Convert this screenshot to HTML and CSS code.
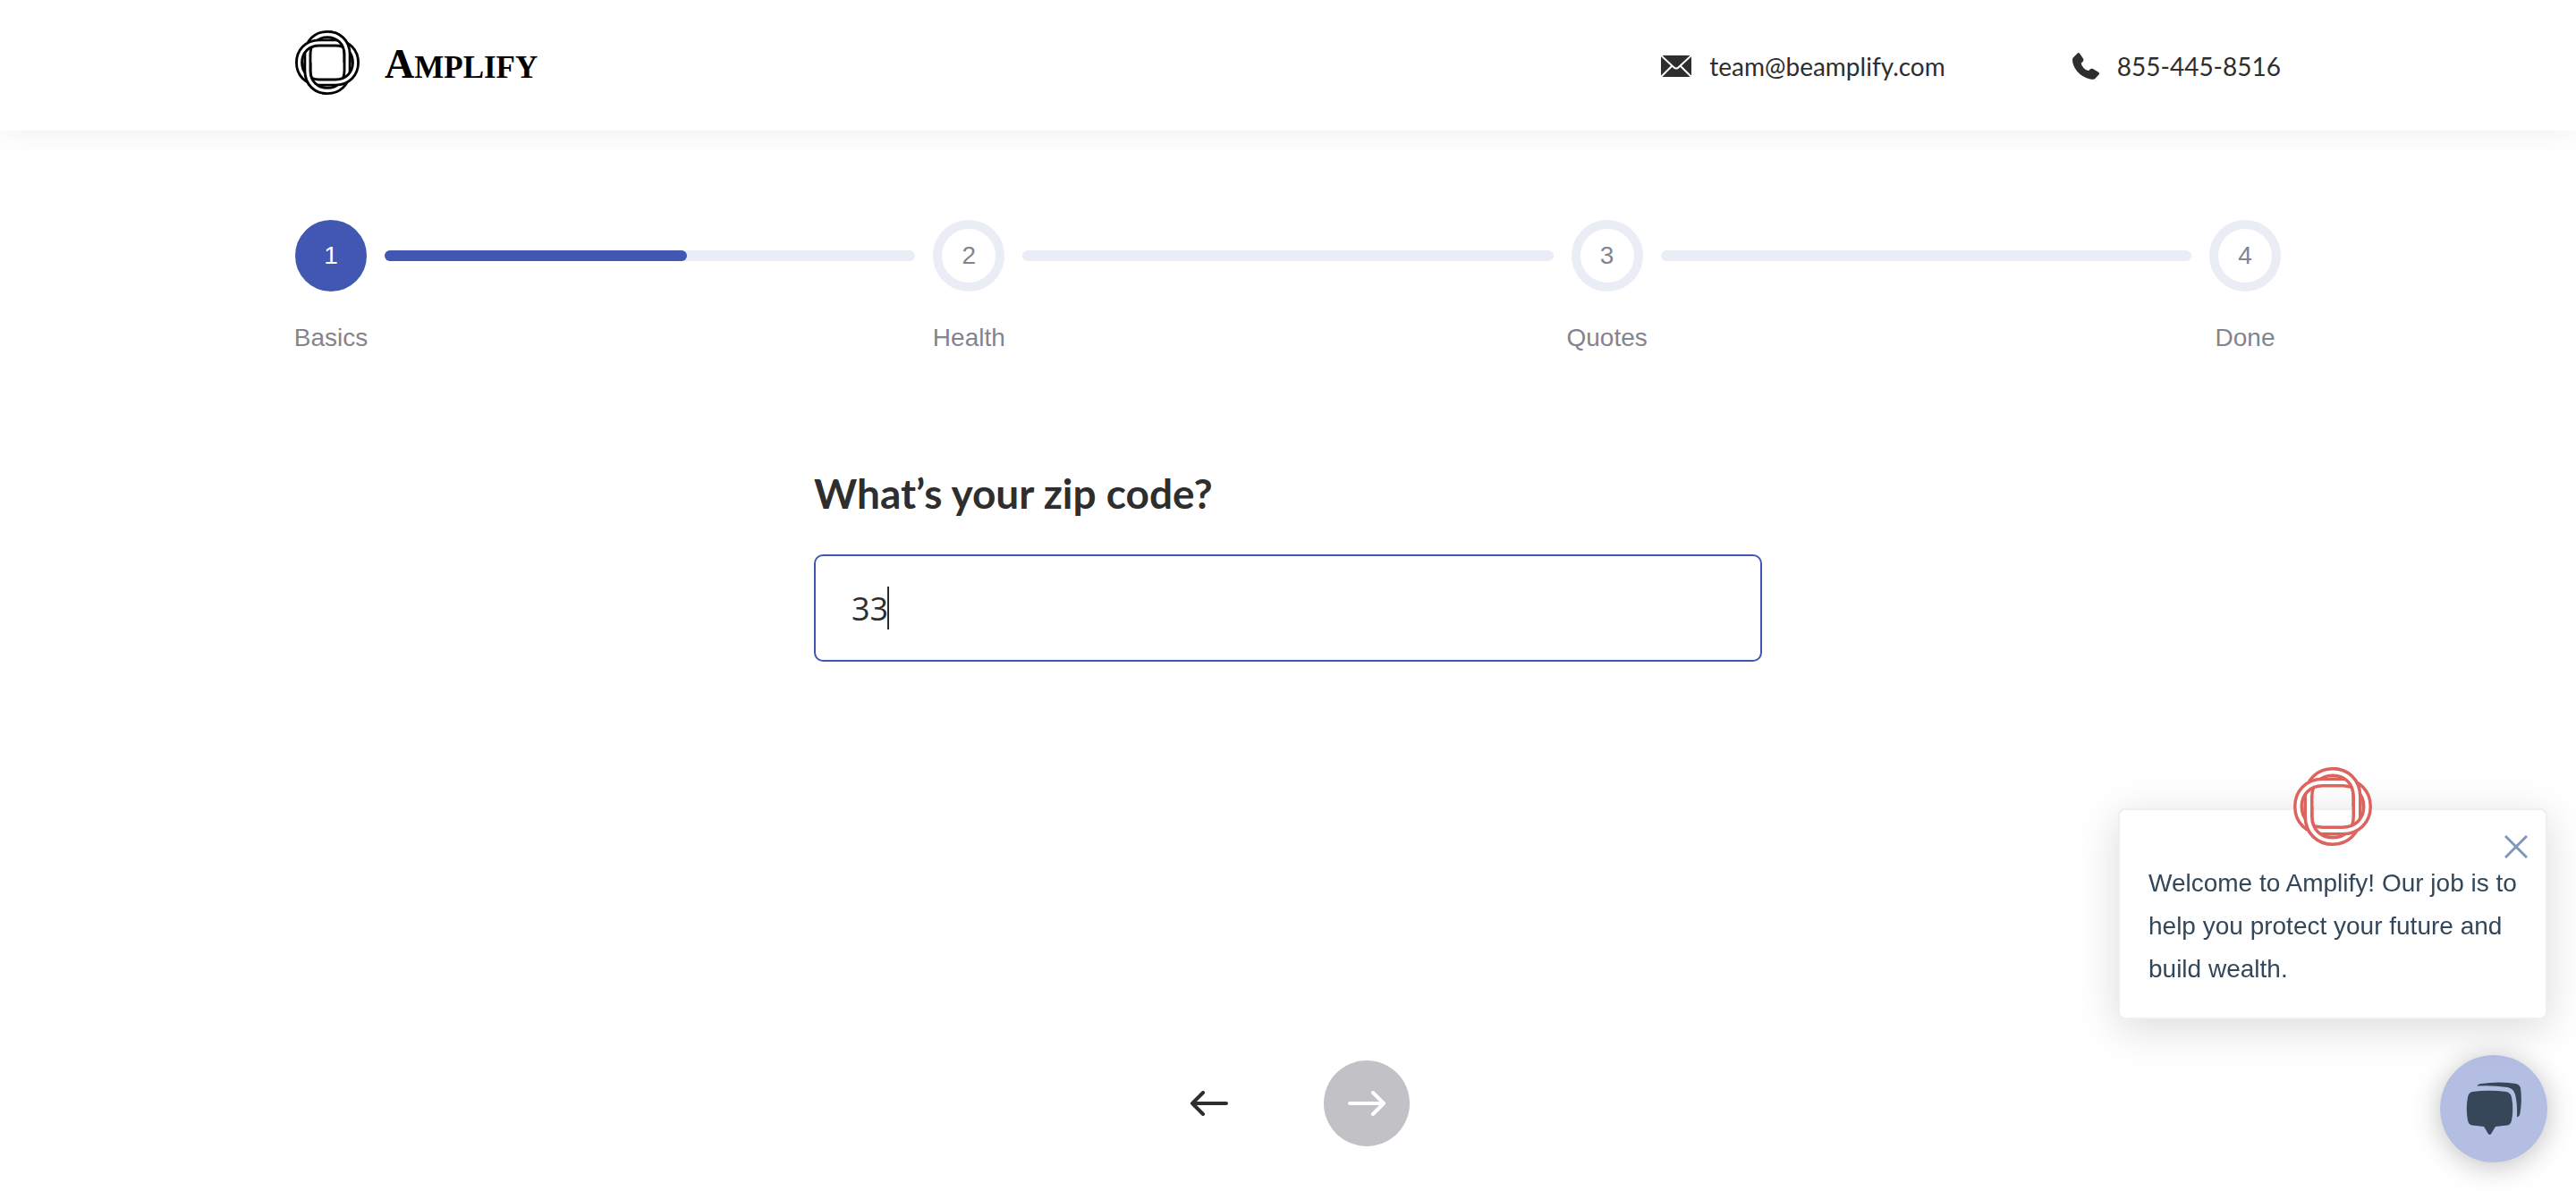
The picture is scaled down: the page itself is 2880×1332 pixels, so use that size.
FILE: index.html
```html
<!DOCTYPE html>
<html lang="en">
<head>
<meta charset="utf-8">
<meta name="viewport" content="width=device-width, initial-scale=1">
<title>Amplify</title>
<link rel="stylesheet" href="styles.css">
</head>
<body class="page">
<svg class="defs" aria-hidden="true">
  <defs>
    <clipPath id="corners"><path d="M0-46H46V0H0ZM-46 0H0V46H-46Z"/></clipPath>
    <path id="tall" d="M-27-11V11C-27 28-15 38.500 0 38.500S27 28 27 11V-11C27-28 15-38.500 0-38.500S-27-28-27-11Z"/>
    <path id="wide" d="M-11-27H11C28-27 38.500-15 38.500 0S28 27 11 27H-11C-28 27-38.500 15-38.500 0S-28-27-11-27Z"/>
    <symbol id="knot" viewBox="-44 -44 88 88">
      <use href="#tall" class="knot-edge"/><use href="#tall" class="knot-core"/>
      <use href="#wide" class="knot-edge"/><use href="#wide" class="knot-core"/>
      <g clip-path="url(#corners)"><use href="#tall" class="knot-edge"/><use href="#tall" class="knot-core"/></g>
    </symbol>
  </defs>
</svg>

<header class="header">
  <div class="container header-row">
    <a class="brand" href="#" aria-label="Amplify">
      <svg class="brand-mark"><use href="#knot"/></svg>
      <span class="brand-name"><span class="brand-initial">A</span>MPLIFY</span>
    </a>
    <nav class="contacts">
      <a class="contact" href="mailto:team@beamplify.com">
        <svg class="icon-mail" viewBox="0 0 34 24"><path d="M0 0H34V24H0Z" fill="#2e2e2e"/><path d="M0 0L14 13Q17 16 20 13L34 0M0 24L12 12M34 24L22 12" fill="none" stroke="#fff" stroke-width="2"/></svg>
        team@beamplify.com
      </a>
      <a class="contact" href="tel:8554458516">
        <svg class="icon-phone" viewBox="0 0 30 30"><path d="M6 0.300Q7-.3 8 .7L12 6.500Q12.800 8 12 9.500L9.700 11.700Q10 14 12.500 17Q15.500 20.200 18.200 20L20.300 18Q21.700 17.300 23 18L29.500 22Q30.400 23 29.700 24.200L25 29.200Q23 30.300 20 29.600Q11 27.600 5 20.500Q0 14 0 7.500Q0 6.500 .8 5.500Z" fill="#2e2e2e"/></svg>
        855-445-8516
      </a>
    </nav>
  </div>
</header>

<main class="container main">
  <ol class="steps">
    <li class="step step-active"><span class="step-dot">1</span><span class="step-label">Basics</span></li>
    <li class="bar" aria-hidden="true"><div class="bar-fill" style="width: 57%"></div></li>
    <li class="step"><span class="step-dot">2</span><span class="step-label">Health</span></li>
    <li class="bar" aria-hidden="true"></li>
    <li class="step"><span class="step-dot">3</span><span class="step-label">Quotes</span></li>
    <li class="bar" aria-hidden="true"></li>
    <li class="step"><span class="step-dot">4</span><span class="step-label">Done</span></li>
  </ol>

  <form class="question">
    <label class="question-title" for="zip">What’s your zip code?</label>
    <div class="field">
      <input class="field-input" id="zip" type="text" inputmode="numeric" value="33">
      <span class="caret"></span>
    </div>
    <div class="actions">
      <button class="round" type="button" aria-label="Back">
        <svg class="arrow" viewBox="0 0 42 28"><path d="M40 14H2M14 2L2 14L14 26"/></svg>
      </button>
      <button class="round round-next" type="submit" aria-label="Next">
        <svg class="arrow" viewBox="0 0 42 28"><path d="M2 14H40M28 2L40 14L28 26"/></svg>
      </button>
    </div>
  </form>
</main>

<aside class="chat">
  <div class="bubble">
    <svg class="bubble-mark"><use href="#knot"/></svg>
    <button class="bubble-close" type="button" aria-label="Close"><svg class="close-icon" viewBox="0 0 26 26"><path d="M1 1L25 25M25 1L1 25"/></svg></button>
    <p class="bubble-text">Welcome to Amplify! Our job is to help you protect your future and build wealth.</p>
  </div>
  <button class="chat-button" type="button" aria-label="Open chat">
    <svg class="chat-icon" viewBox="0 0 62 60"><path d="M7 11Q26 8.500 45 11Q50 12 51 17Q53.500 30 51 43Q50 48 46 48.500L33 50Q31 53 28.500 57.500Q26.500 60.500 24.500 57.500Q22 53 20 50L7 48.500Q3 48 2 43Q-.5 30 2 17Q3 12 7 11Z"/><path d="M12.500 4.500Q13 2.500 17 2Q37-1 56 2Q60 3 61 7Q63 21 60.500 35Q60 38.500 57 39.500Q57.500 24 55 14Q53 7 46 6Q30 3.500 12.500 4.500Z"/></svg>
  </button>
</aside>
</body>
</html>
```
FILE: styles.css
```css
* { box-sizing: border-box; }

.page {
  display: flex;
  flex-direction: column;
  min-height: 100vh;
  margin: 0;
  background: #fff;
  color: #2e2e2e;
  font-family: Lato, "Liberation Sans", sans-serif;
}

.defs { position: absolute; width: 0; height: 0; }

.knot-edge,
.knot-core { fill: none; }
.knot-edge { stroke: currentColor; stroke-width: 11; }
.knot-core { stroke: #fff; stroke-width: 4; }

.container {
  width: 100%;
  max-width: 2300px;
  margin: 0 auto;
  padding: 0 40px;
}

.header { box-shadow: 0 4px 32px rgba(0, 0, 0, 0.06); }

.header-row {
  display: flex;
  align-items: center;
  justify-content: space-between;
  padding-top: 34px;
  padding-bottom: 40px;
}

.brand {
  display: flex;
  align-items: center;
  gap: 28px;
  color: #000;
  text-decoration: none;
}
.brand-mark { width: 72px; height: 72px; }
.brand-name {
  padding-top: 8px;
  font: bold 35px/48px "Liberation Serif", serif;
}
.brand-initial { font-size: 46px; }

.contacts {
  display: flex;
  gap: 142px;
  padding-top: 8px;
}
.contact {
  display: flex;
  align-items: center;
  gap: 20px;
  color: #2e2e2e;
  font-size: 28px;
  line-height: 40px;
  text-decoration: none;
}
.icon-mail { width: 34px; height: 24px; }
.icon-phone { width: 30px; height: 30px; }

.main {
  display: flex;
  flex: 1;
  flex-direction: column;
  padding-top: 100px;
  padding-bottom: 50px;
}

.steps {
  display: flex;
  gap: 20px;
  margin: 0;
  padding: 0;
  list-style: none;
  color: #84848f;
  font: 28px/32px "Liberation Sans", sans-serif;
}
.step {
  display: flex;
  flex-direction: column;
  align-items: center;
  gap: 36px;
  width: 80px;
}
.step-dot {
  display: flex;
  align-items: center;
  justify-content: center;
  width: 80px;
  height: 80px;
  border: 10px solid #eaecf6;
  border-radius: 50%;
}
.step-active .step-dot {
  border-color: #4257b2;
  background: #4257b2;
  color: #fff;
}
.step-label { white-space: nowrap; }
.bar {
  flex: 1;
  height: 12px;
  margin-top: 34px;
  border-radius: 6px;
  background: #eaecf6;
}
.bar-fill {
  height: 12px;
  border-radius: 6px;
  background: #4257b2;
}

.question {
  display: flex;
  flex: 1;
  flex-direction: column;
  width: 100%;
  max-width: 1060px;
  margin: 128px auto 0;
}
.question-title {
  margin-bottom: 38px;
  font-size: 46px;
  font-weight: bold;
  line-height: 60px;
}
.field { position: relative; }
.field-input {
  width: 100%;
  height: 120px;
  padding: 0 40px;
  border: 2px solid #4257b2;
  border-radius: 10px;
  background: #fff;
  color: #2e2e2e;
  font: 36px/48px "Open Sans", sans-serif;
  outline: none;
}
.caret {
  position: absolute;
  top: 36px;
  left: 82px;
  width: 2px;
  height: 48px;
  background: #2e2e2e;
}

.actions {
  display: flex;
  justify-content: center;
  gap: 80px;
  margin-top: auto;
}
.round {
  display: flex;
  align-items: center;
  justify-content: center;
  width: 96px;
  height: 96px;
  padding: 0;
  border: 0;
  border-radius: 50%;
  background: none;
  color: #2e2e2e;
}
.round-next { background: #c1c1c6; color: #fff; }
.arrow {
  width: 42px;
  height: 28px;
  fill: none;
  stroke: currentColor;
  stroke-width: 4;
  stroke-linecap: round;
  stroke-linejoin: round;
}

.chat {
  position: fixed;
  right: 32px;
  bottom: 32px;
  display: flex;
  flex-direction: column;
  align-items: flex-end;
  gap: 40px;
}
.bubble {
  position: relative;
  width: 480px;
  padding: 58px 32px 30px;
  border: 2px solid #eaf0f6;
  border-radius: 8px;
  background: #fff;
  box-shadow: 0 10px 48px rgba(0, 0, 0, 0.15);
}
.bubble-mark {
  position: absolute;
  top: -48px;
  left: calc(50% - 44px);
  width: 88px;
  height: 88px;
  color: #dc645e;
}
.bubble-close {
  position: absolute;
  top: 28px;
  right: 20px;
  display: flex;
  padding: 0;
  border: 0;
  background: none;
}
.close-icon {
  width: 26px;
  height: 26px;
  fill: none;
  stroke: #7c98b6;
  stroke-width: 3;
}
.bubble-text {
  margin: 0;
  color: #33475b;
  font: 28px/48px "Liberation Sans", sans-serif;
}
.chat-button {
  display: flex;
  align-items: center;
  justify-content: center;
  width: 120px;
  height: 120px;
  padding: 0;
  border: 0;
  border-radius: 50%;
  background: #b4bee2;
  box-shadow: 0 4px 32px rgba(0, 0, 0, 0.25);
}
.chat-icon { width: 62px; height: 60px; fill: #37475a; }
```
